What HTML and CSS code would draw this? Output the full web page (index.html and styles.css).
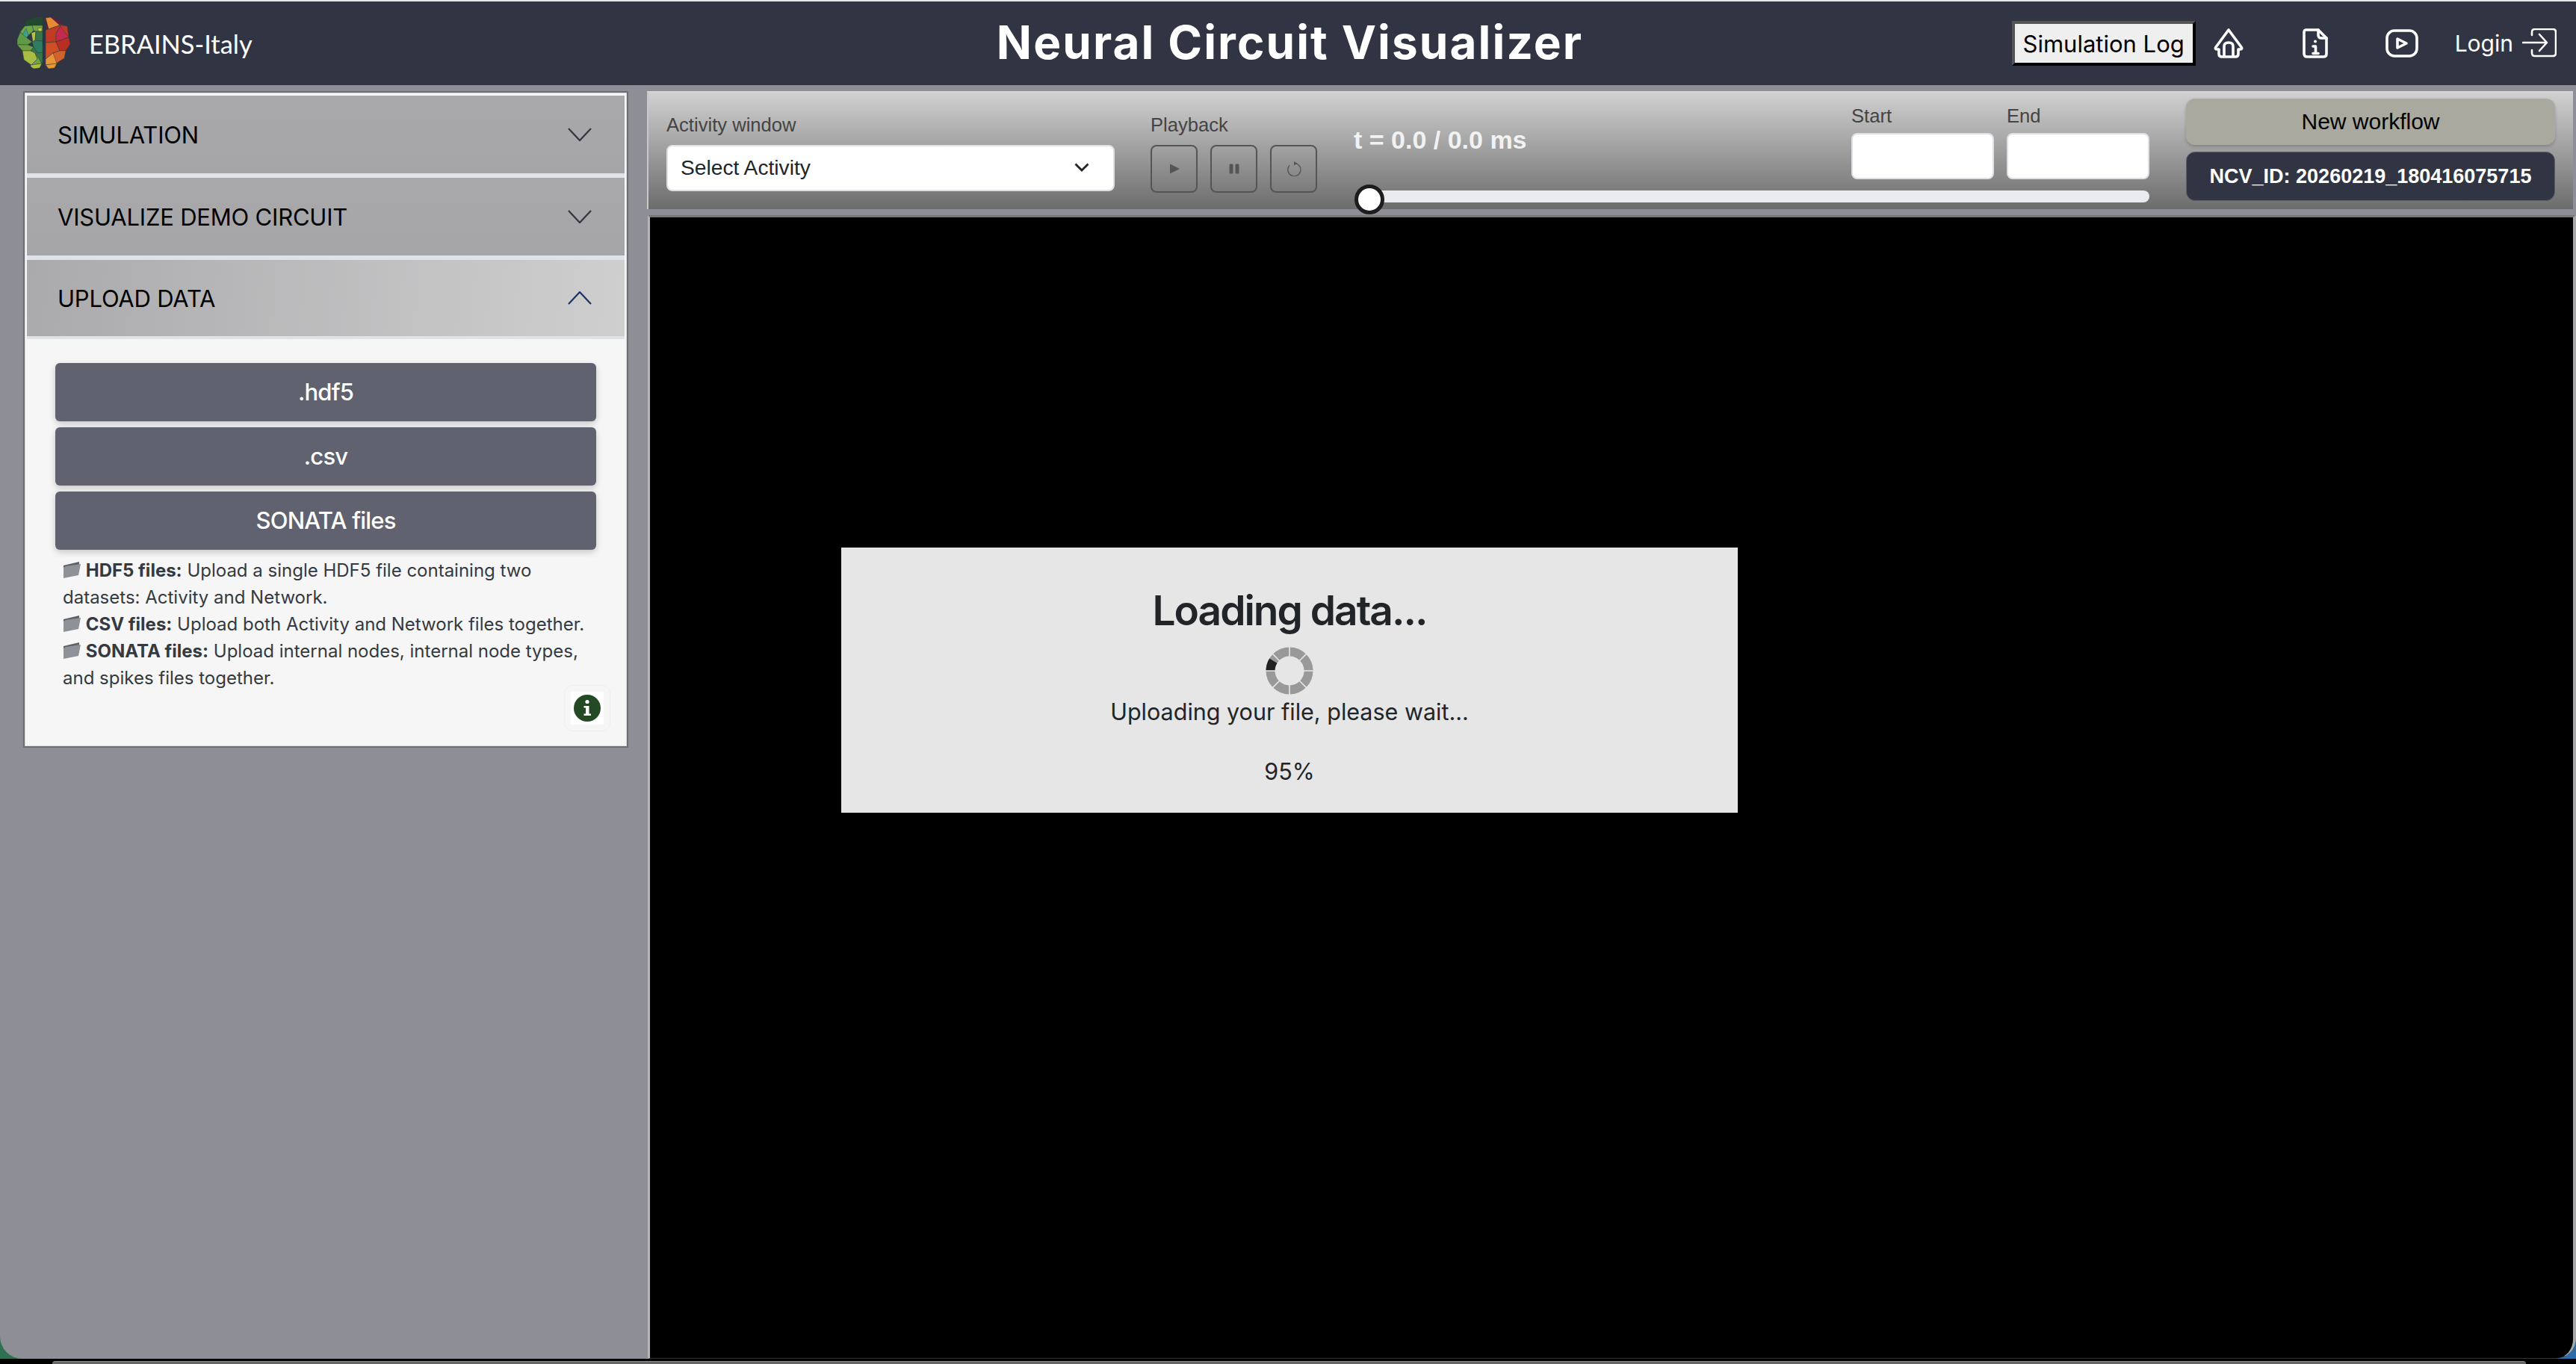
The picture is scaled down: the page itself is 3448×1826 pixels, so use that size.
FILE: index.html
```html
<!DOCTYPE html>
<html lang="en">
<head>
<meta charset="utf-8">
<title>Neural Circuit Visualizer</title>
<link rel="stylesheet" href="styles.css">
</head>
<body>
<div class="app">
  <header class="topbar">
    <div class="brand">
      <svg class="logo" viewBox="0 0 71 70" aria-hidden="true">
        <g class="logo-facets">
          <polygon points="11,5 24,0 34,0 34,11 20,11 10,12" fill="#22492f"/>
          <polygon points="10,12 20,11 22,18 12,27 4,20" fill="#6ea64a"/>
          <polygon points="5,27 12,15 15,24 12,29" fill="#3aa28e"/>
          <polygon points="20,11 34,11 34,19 25,19 22,18" fill="#6ea64a"/>
          <polygon points="27,15 33,14 33,19 29,19" fill="#c9c94e"/>
          <polygon points="19,21 25,19 24,31 21,33" fill="#b5c44c"/>
          <polygon points="4,20 12,27 20,33 14,37 0,37 0,30" fill="#5f9a45"/>
          <polygon points="24,31 25,19 34,19 34,32" fill="#38764a"/>
          <polygon points="20,33 24,31 34,32 34,47 27,48 22,40" fill="#2f7d60"/>
          <polygon points="0,37 14,37 22,40 18,45 7,45" fill="#6e9f43"/>
          <polygon points="18,45 22,40 27,48 34,47 34,62 27,55 24,48" fill="#38764a"/>
          <polygon points="7,45 18,45 24,48 27,56 19,64 9,57" fill="#a8bd42"/>
          <polygon points="24,48 33,62 19,64 27,56" fill="#73a548"/>
          <polygon points="18,64 33,62 30,68 22,69 18,66" fill="#aebf43"/>
          <polygon points="38,1 45,0 59,10 42,16" fill="#e68a34"/>
          <polygon points="45,0 59,5 57,11" fill="#6c1d3d"/>
          <polygon points="38,3 41,14 38,17" fill="#5d2138"/>
          <polygon points="38,17 42,16 59,10 52,22 52,33 38,34" fill="#c13a24"/>
          <polygon points="52,22 59,10 67,12 69,27 52,33" fill="#c4294e"/>
          <polygon points="57,11 67,12 69,27" fill="#c13a24"/>
          <polygon points="38,34 52,33 57,45 48,48 38,56" fill="#cf4e26"/>
          <polygon points="52,33 69,27 71,36 65,45 57,45" fill="#b92e22"/>
          <polygon points="48,48 57,45 65,45 63,55 52,62 48,56" fill="#d2612c"/>
          <polygon points="38,56 48,48 53,62 38,64" fill="#e89438"/>
          <polygon points="38,64 53,62 50,68 42,69" fill="#e59a35"/>
        </g>
      </svg>
      <span class="brand-name">EBRAINS-Italy</span>
    </div>
    <h1 class="app-title">Neural Circuit Visualizer</h1>
    <nav class="top-actions">
      <button class="log-btn" type="button">Simulation Log</button>
      <svg class="nav-icon" viewBox="0 0 44 40" aria-hidden="true">
        <path d="M22 2 L5 25 Q3 28 7 28 H9 V34 Q9 38 13 38 H31 Q35 38 35 34 V28 H37 Q41 28 39 25 Z"/>
        <path d="M16 37 V24 Q16 19 22 19 Q28 19 28 24 V37"/>
      </svg>
      <svg class="nav-icon" viewBox="0 0 44 40" aria-hidden="true">
        <path d="M10 2 H26 L37 13 V34 Q37 38 33 38 H11 Q7 38 7 34 V5 Q7 2 10 2 Z"/>
        <path d="M26 2 V9 Q26 13 30 13 H37"/>
        <path d="M19 24 H22.5 V33 M19 33.5 H26"/>
        <circle cx="22" cy="17.5" r="2" class="solid"/>
      </svg>
      <svg class="nav-icon nav-icon-last" viewBox="0 0 44 40" aria-hidden="true">
        <rect x="2" y="3" width="40" height="34" rx="10"/>
        <path d="M16 14 L28 20 L16 26 Z"/>
      </svg>
      <span class="login">Login</span>
      <svg class="login-icon" viewBox="0 0 46 40" aria-hidden="true">
        <path d="M13 9 V5 Q13 1 17 1 H41 Q45 1 45 5 V33 Q45 37 41 37 H17 Q13 37 13 33 V29"/>
        <path d="M1 19 H33 M23 8 L33 19 L23 30"/>
      </svg>
    </nav>
  </header>

  <div class="workspace">
    <aside class="sidebar">
      <div class="accordion">
        <div class="acc-head">
          <span>SIMULATION</span>
          <svg class="chev" viewBox="0 0 32 18" aria-hidden="true"><path d="M1 1 L16 17 L31 1"/></svg>
        </div>
        <div class="acc-head">
          <span>VISUALIZE DEMO CIRCUIT</span>
          <svg class="chev" viewBox="0 0 32 18" aria-hidden="true"><path d="M1 1 L16 17 L31 1"/></svg>
        </div>
        <div class="acc-head open">
          <span>UPLOAD DATA</span>
          <svg class="chev" viewBox="0 0 32 18" aria-hidden="true"><path d="M1 17 L16 1 L31 17"/></svg>
        </div>
        <div class="acc-body">
          <button class="upload-btn" type="button">.hdf5</button>
          <button class="upload-btn" type="button">.csv</button>
          <button class="upload-btn" type="button">SONATA files</button>
          <div class="help">
            <p><svg class="folder" viewBox="0 0 24 22" aria-hidden="true"><path d="M1 5 L22 0 V4 L1 8 Z" fill="#5b6268"/><path d="M1 8 L4 6 L24 3 L21 18 L1 22 Z" fill="#8c9297"/></svg> <b>HDF5 files:</b> Upload a single HDF5 file containing two datasets: Activity and Network.</p>
            <p><svg class="folder" viewBox="0 0 24 22" aria-hidden="true"><path d="M1 5 L22 0 V4 L1 8 Z" fill="#5b6268"/><path d="M1 8 L4 6 L24 3 L21 18 L1 22 Z" fill="#8c9297"/></svg> <b>CSV files:</b> Upload both Activity and Network files together.</p>
            <p><svg class="folder" viewBox="0 0 24 22" aria-hidden="true"><path d="M1 5 L22 0 V4 L1 8 Z" fill="#5b6268"/><path d="M1 8 L4 6 L24 3 L21 18 L1 22 Z" fill="#8c9297"/></svg> <b>SONATA files:</b> Upload internal nodes, internal node types, and spikes files together.</p>
          </div>
          <div class="info-row">
            <span class="info-frame">
              <svg class="info" viewBox="0 0 36 36" aria-hidden="true">
                <circle cx="18" cy="18" r="18" fill="#234a25"/>
                <circle cx="18" cy="9.5" r="2.6" fill="#fff"/>
                <path d="M13.5 15 H20.5 V25.5 H23 V28 H13.5 V25.5 H16 V17.5 H13.5 Z" fill="#fff"/>
              </svg>
            </span>
          </div>
        </div>
      </div>
    </aside>

    <main class="main">
      <section class="toolbar">
        <div class="field">
          <label class="tool-label">Activity window</label>
          <div class="select">
            <span>Select Activity</span>
            <svg class="select-chev" viewBox="0 0 20 12" aria-hidden="true"><path d="M1.5 1.5 L10 10 L18.5 1.5"/></svg>
          </div>
        </div>
        <div class="field">
          <label class="tool-label">Playback</label>
          <div class="play-row">
            <span class="play-btn"><svg viewBox="0 0 20 20" aria-hidden="true"><path d="M4 3.5 L17 10 L4 16.5 Z" class="fill"/></svg></span>
            <span class="play-btn"><svg viewBox="0 0 20 20" aria-hidden="true"><rect x="3.5" y="3.5" width="5" height="13" rx="1.5" class="fill"/><rect x="11.5" y="3.5" width="5" height="13" rx="1.5" class="fill"/></svg></span>
            <span class="play-btn"><svg viewBox="0 0 20 20" aria-hidden="true"><path d="M11 2.6 A8.6 8.6 0 1 1 4.2 5.2" class="line"/><path d="M10 0 L14.5 2.8 L10 5.6 Z" class="fill"/></svg></span>
          </div>
        </div>
        <div class="timeline">
          <div class="time-row">
            <div class="time-text">t = 0.0 / 0.0 ms</div>
            <div class="range-fields">
              <div class="range-field"><label class="tool-label">Start</label><div class="text-input"></div></div>
              <div class="range-field"><label class="tool-label">End</label><div class="text-input"></div></div>
            </div>
          </div>
          <div class="slider"><span class="thumb"></span></div>
        </div>
        <div class="workflow">
          <button class="new-btn" type="button">New workflow</button>
          <div class="ncv-id">NCV_ID: 20260219_180416075715</div>
        </div>
      </section>

      <section class="canvas"></section>
    </main>
  </div>
</div>
<div class="dock"><span class="dock-bar"></span></div>

<div class="overlay">
  <div class="loading">
    <h2 class="loading-title">Loading data...</h2>
    <svg class="spinner" viewBox="0 0 64 64" aria-hidden="true">
      <circle cx="32" cy="32" r="25.5" class="ring"/>
      <path d="M10.3 18.6 A25.5 25.5 0 0 0 6.5 32" class="ring-on"/>
      <path d="M32 0 V14 M32 50 V64 M0 32 H14 M50 32 H64 M9.4 9.4 L19 19 M45 45 L54.6 54.6 M54.6 9.4 L45 19 M19 45 L9.4 54.6" class="ring-gap"/>
    </svg>
    <p class="loading-text">Uploading your file, please wait...</p>
    <p class="loading-pct">95%</p>
  </div>
</div>
</body>
</html>
```
FILE: styles.css
```css
* { box-sizing: border-box; }
html, body { margin: 0; height: 100%; }
body {
  width: 3448px;
  height: 1826px;
  overflow: hidden;
  background: linear-gradient(90deg, #2f7050 0 40px, #000 40px 3400px, #2c6aa8 3400px);
  font-family: Inter, "Liberation Sans", sans-serif;
}
.app {
  height: 1819px;
  background: #8e8e97;
  border-top: 2px solid #e4e7ec;
  border-radius: 0 0 28px 30px;
  display: flex;
  flex-direction: column;
  overflow: hidden;
}
.dock {
  height: 7px;
  background: #000;
  padding: 3px 67px 0 70px;
  display: flex;
}
.dock-bar {
  flex: 1;
  background: #666;
  border-top: 1px solid #8a8a8a;
  border-radius: 12px 12px 0 0;
}

/* top bar */
.topbar {
  height: 112px;
  background: #313543;
  display: grid;
  grid-template-columns: 1fr auto 1fr;
  align-items: center;
  padding: 0 26px 0 23px;
  flex: none;
}
.brand { display: flex; align-items: center; gap: 25px; }
.logo { width: 71px; height: 70px; flex: none; }
.logo-facets polygon { stroke: #2b3a3a; stroke-width: .45; stroke-linejoin: round; }
.brand-name { font-family: Lato, sans-serif; font-size: 34.4px; color: #fff; }
.app-title {
  margin: 0 0 4px 8px;
  font-weight: 700;
  font-size: 62px;
  letter-spacing: 2.1px;
  color: #fff;
  white-space: nowrap;
}
.top-actions { display: flex; align-items: center; justify-content: flex-end; }
.log-btn {
  width: 246px;
  height: 60px;
  padding: 0;
  background: #efefef;
  border: 4px solid;
  border-color: #555 #000 #000 #555;
  color: #000;
  font-family: Inter, sans-serif;
  font-size: 31px;
  margin-right: 22px;
}
.nav-icon {
  width: 44px;
  height: 40px;
  margin-right: 72px;
  fill: none;
  stroke: #fff;
  stroke-width: 3.6;
  stroke-linejoin: round;
  stroke-linecap: round;
}
.nav-icon .solid { fill: #fff; stroke: none; }
.nav-icon-last { margin-right: 49px; }
.login { font-size: 30px; color: #fff; margin-right: 12px; }
.login-icon {
  width: 46px;
  height: 40px;
  fill: none;
  stroke: #fff;
  stroke-width: 2.6;
  stroke-linejoin: round;
  stroke-linecap: round;
}

/* workspace */
.workspace {
  flex: 1;
  display: grid;
  grid-template-columns: 866px 1fr;
  min-height: 0;
}

/* sidebar */
.sidebar { padding: 8px 25px 0 31px; }
.accordion {
  height: 879px;
  background: #f6f6f6;
  border: 2px solid #6f6f73;
  padding: 4px 3px 0;
  box-shadow: inset 0 0 0 1px #d8dbe0;
}
.acc-head {
  height: 110px;
  padding: 0 44px 0 41px;
  border-bottom: 6px solid #dfe2e8;
  background: linear-gradient(180deg, #a9a9ac, #a5a5a8);
  display: flex;
  align-items: center;
  justify-content: space-between;
  font-size: 31px;
  color: #000;
}
.acc-head span { letter-spacing: -0.2px; }
.acc-head.open {
  background: linear-gradient(95deg, #aaaaac, #cfcfd0);
  border-bottom-width: 4px;
  height: 106px;
}
.chev { width: 32px; height: 18px; fill: none; stroke: #33363c; stroke-width: 2.2; }
.open .chev { stroke: #1b3466; }
.acc-body { padding: 32px 38px 0; }
.upload-btn {
  display: block;
  width: 100%;
  height: 78px;
  margin-bottom: 8px;
  padding: 0 0 2px;
  border: 0;
  border-radius: 6px;
  background: #60626f;
  box-shadow: 0 3px 8px rgba(0, 0, 0, .2);
  color: #fff;
  font-family: Inter, sans-serif;
  font-weight: 500;
  font-size: 31px;
  letter-spacing: -0.8px;
}
.help {
  padding: 2px 0 0 10px;
  font-size: 24px;
  line-height: 36px;
  color: #343a40;
}
.help p { margin: 0; }
.help b { font-weight: 700; }
.folder { width: 24px; height: 22px; vertical-align: -2px; }
.info-row { display: flex; justify-content: flex-end; margin-right: -10px; }
.info-frame {
  padding: 4px;
  background: #fff;
  outline: 1px solid #efefef;
  outline-offset: 8px;
  display: flex;
  border-radius: 2px;
}
.info { width: 36px; height: 36px; display: block; }

/* main column */
.main { display: flex; flex-direction: column; min-width: 0; padding-top: 8px; padding-right: 4px; }
.toolbar {
  height: 158px;
  flex: none;
  background: linear-gradient(180deg, #d0d0d0 0, #6c6c6d 100%);
  border-top: 2px solid #d6d6d6;
  border-left: 2px solid #c8c8c8;
  display: grid;
  grid-template-columns: 648px 262px 1075px 1fr;
  padding-left: 24px;
}
.tool-label { display: block; font-family: "Liberation Sans", sans-serif; font-size: 25.6px; color: #444; line-height: 30px; }
.field { padding-top: 28px; }
.select {
  width: 600px;
  height: 62px;
  margin-top: 12px;
  background: #fff;
  border: 2px solid #dde1e6;
  border-radius: 8px;
  padding: 0 32px 2px 17px;
  display: flex;
  align-items: center;
  justify-content: space-between;
  font-family: "Liberation Sans", sans-serif;
  font-size: 28.2px;
  color: #212529;
}
.select-chev { width: 20px; height: 12px; fill: none; stroke: #222; stroke-width: 2.8; }
.play-row { display: flex; gap: 17px; margin-top: 12px; }
.play-btn {
  width: 63px;
  height: 64px;
  border: 2px solid #555;
  border-radius: 8px;
  display: flex;
  align-items: center;
  justify-content: center;
}
.play-btn svg { width: 20px; height: 20px; }
.play-btn .fill { fill: #555; }
.play-btn .line { fill: none; stroke: #555; stroke-width: 1.3; }
.timeline { display: flex; flex-direction: column; padding-left: 10px; }
.time-row { display: flex; justify-content: space-between; height: 117px; }
.time-text {
  font-family: "Liberation Sans", sans-serif;
  font-weight: 700;
  font-size: 34px;
  color: #f2f2f2;
  padding-top: 44px;
}
.range-fields { display: flex; gap: 17px; padding-top: 16px; width: 399px; }
.range-field { flex: 1; }
.text-input {
  height: 62px;
  margin-top: 8px;
  background: #fff;
  border: 2px solid #dde1e6;
  border-radius: 8px;
}
.slider {
  height: 16px;
  margin-left: 15px;
  margin-top: 14px;
  background: #e9ebef;
  border-radius: 0 8px 8px 0;
  position: relative;
}
.thumb {
  position: absolute;
  left: -14px;
  top: -8px;
  width: 40px;
  height: 40px;
  border-radius: 50%;
  background: #fff;
  border: 5px solid #1d1d1f;
}
.workflow { padding: 8px 24px 0 49px; display: flex; flex-direction: column; gap: 9px; }
.new-btn {
  height: 62px;
  border: 0;
  border-radius: 12px;
  background: #a9a99f;
  box-shadow: 0 2px 4px rgba(0, 0, 0, .2);
  font-family: "Liberation Sans", sans-serif;
  font-size: 30px;
  color: #000;
}
.ncv-id {
  height: 66px;
  border: 1px solid #5b5f69;
  border-radius: 12px;
  background: #313543;
  color: #fff;
  font-family: "Liberation Sans", sans-serif;
  font-weight: 700;
  font-size: 27px;
  display: flex;
  align-items: center;
  justify-content: center;
  white-space: nowrap;
}
.canvas {
  flex: 1;
  margin: 8px -4px 0 1px;
  background: #000;
  border-top: 3px solid #777;
  border-left: 3px solid #b5b5b8;
  border-right: 4px solid #a8a8aa;
  border-bottom: 1px solid #333;
  border-bottom-right-radius: 26px;
}

/* modal */
.overlay {
  position: fixed;
  inset: 0;
  display: flex;
  align-items: center;
  justify-content: center;
  padding: 0 0 5px 4px;
}
.loading {
  width: 1200px;
  height: 355px;
  background: #e6e6e6;
  text-align: center;
  color: #212529;
  padding-top: 52px;
}
.loading-title { margin: 0; font-weight: 600; font-size: 55px; letter-spacing: -2px; line-height: 64px; }
.spinner { display: block; width: 64px; height: 64px; margin: 17px auto 0; }
.ring { fill: none; stroke: #999; stroke-width: 12; }
.ring-on { fill: none; stroke: #222; stroke-width: 12; }
.ring-gap { fill: none; stroke: #e6e6e6; stroke-width: 1.6; }
.loading-text { margin: 3px 0 0; font-size: 30.5px; line-height: 40px; }
.loading-pct { margin: 40px 0 0; font-size: 30.5px; line-height: 40px; }
```
